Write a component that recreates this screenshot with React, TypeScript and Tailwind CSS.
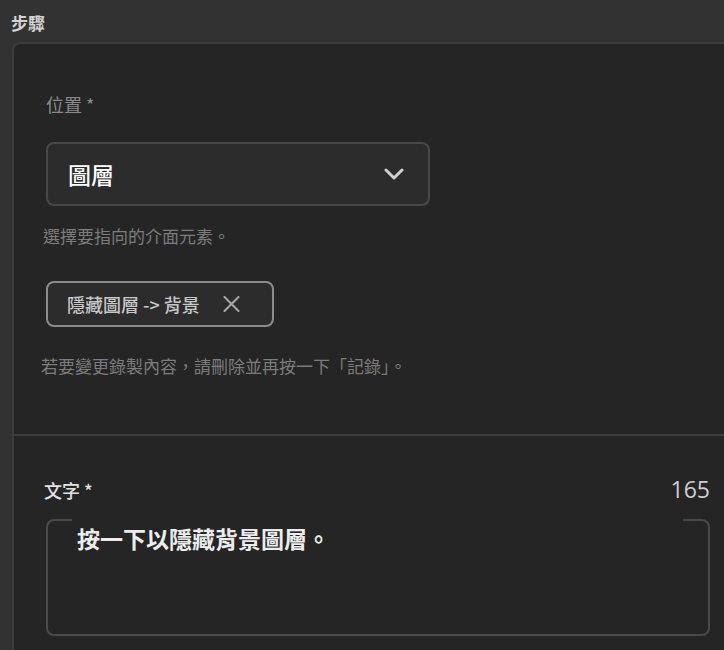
import React from 'react';

const font = { fontFamily: '"Noto Sans CJK TC", "Noto Sans", sans-serif' };

function ChevronDown() {
    return (
        <svg width="20" height="12" viewBox="0 0 20 12" fill="none">
            <path d="M2 2 L10 10 L18 2" stroke="#d0d0d0" strokeWidth="3" strokeLinecap="round" strokeLinejoin="round" />
        </svg>
    );
}

function CloseIcon() {
    return (
        <svg width="17" height="16" viewBox="0 0 17 16" fill="none">
            <path d="M1.5 1 L15.5 15 M15.5 1 L1.5 15" stroke="#a8a8a8" strokeWidth="2" strokeLinecap="round" />
        </svg>
    );
}

export default function App() {
    return (
        <div className="flex h-[650px] w-[724px] flex-col overflow-hidden bg-[#323232] pl-[12px]" style={font}>
            <div className="-ml-[1px] pt-[10px] text-[17px] font-semibold leading-[26px] text-[#d2d2d2]">步驟</div>

            {/* 卡片 */}
            <div className="mt-[6px] w-[760px] flex-1 rounded-tl-[8px] border-l-2 border-t-2 border-[#3c3c3c] bg-[#252525]">
                <div className="px-[32px] pt-[46px] pb-[55px]">
                    <div className="text-[18px] leading-[28px] text-[#8a8a8a]">位置 *</div>

                    <button className="mt-[24px] flex h-[64px] w-[384px] items-center justify-between rounded-[8px] border-2 border-[#484848] bg-[#2c2c2c] pl-[20px] pr-[24px]">
                        <span className="text-[23px] font-medium text-white">圖層</span>
                        <ChevronDown />
                    </button>

                    <div className="mt-[17px] -ml-[3px] text-[17px] leading-[26px] text-[#7c7c7c]">選擇要指向的介面元素。</div>

                    <div className="mt-[32px] flex h-[46px] w-[228px] items-center rounded-[8px] border-2 border-[#8c8c8c] bg-[#2c2c2c] pl-[19px]">
                        <span className="text-[18px] font-medium text-[#c8c8c8]">隱藏圖層 -&gt; 背景</span>
                        <span className="ml-[23px] flex items-center"><CloseIcon /></span>
                    </div>

                    <div className="mt-[26px] -ml-[5px] text-[17px] leading-[26px] text-[#7c7c7c]">若要變更錄製內容，請刪除並再按一下「記錄」。</div>
                </div>

                <div className="h-[2px] bg-[#3c3c3c]" />

                <div className="w-[728px] px-[32px] pt-[38px]">
                    <div className="flex items-end justify-between">
                        <span className="-ml-[2px] text-[18px] font-medium leading-[28px] text-[#e2e2e2]">文字 *</span>
                        <span className="text-[23px] leading-[30px] text-[#cfcfcf]" style={{ fontFamily: '"Open Sans", "Noto Sans", sans-serif' }}>165</span>
                    </div>

                    <fieldset className="mt-[15px] h-[117px] rounded-[8px] border-2 border-[#4a4a4a]">
                        <legend className="ml-[24px] h-0 w-[611px] p-0 text-[0px]">&nbsp;</legend>
                        <div className="pl-[29px] pt-[1px] text-[23px] font-semibold leading-[32px] text-[#ececec]">按一下以隱藏背景圖層。</div>
                    </fieldset>
                </div>
            </div>
        </div>
    );
}
